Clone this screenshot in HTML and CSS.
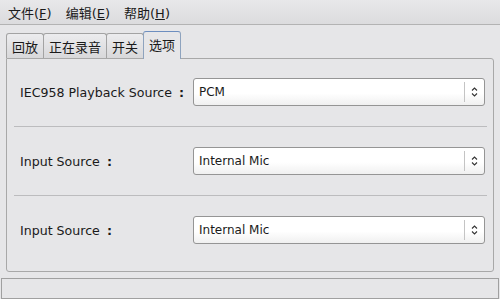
FILE: index.html
```html
<!DOCTYPE html>
<html lang="zh-CN">
<head>
  <meta charset="UTF-8" />
  <title>混音器</title>
  <link rel="stylesheet" href="styles.css">
</head>
<body>
  <div class="menubar">
    <span class="menu">文件(<u>F</u>)</span>
    <span class="menu">编辑(<u>E</u>)</span>
    <span class="menu">帮助(<u>H</u>)</span>
  </div>

  <!-- Tabs -->
  <div class="tabbar">
    <div class="tab">回放</div>
    <div class="tab">正在录音</div>
    <div class="tab">开关</div>
    <div class="tab active">选项</div>
  </div>

  <div class="panel">
    <div class="row">
      <span class="label">IEC958 Playback Source <b>:</b></span>
      <div class="combo">
        <span class="combo-text">PCM</span>
        <span class="combo-btn">
          <svg width="9" height="14" viewBox="0 0 9 14"><path d="M2 5.5 L4.5 3 L7 5.5 M2 8.5 L4.5 11 L7 8.5" fill="none" stroke="#333" stroke-width="1.1"/></svg>
        </span>
      </div>
    </div>
    <div class="sep"></div>
    <div class="row">
      <span class="label">Input Source <b>:</b></span>
      <div class="combo">
        <span class="combo-text">Internal Mic</span>
        <span class="combo-btn">
          <svg width="9" height="14" viewBox="0 0 9 14"><path d="M2 5.5 L4.5 3 L7 5.5 M2 8.5 L4.5 11 L7 8.5" fill="none" stroke="#333" stroke-width="1.1"/></svg>
        </span>
      </div>
    </div>
    <div class="sep"></div>
    <div class="row">
      <span class="label">Input Source <b>:</b></span>
      <div class="combo">
        <span class="combo-text">Internal Mic</span>
        <span class="combo-btn">
          <svg width="9" height="14" viewBox="0 0 9 14"><path d="M2 5.5 L4.5 3 L7 5.5 M2 8.5 L4.5 11 L7 8.5" fill="none" stroke="#333" stroke-width="1.1"/></svg>
        </span>
      </div>
    </div>
  </div>

  <div class="statusbar"></div>
</body>
</html>
```

FILE: styles.css
```css
* {
  box-sizing: border-box;
}
html, body {
  margin: 0;
  height: 299px;
  overflow: hidden;
}
body {
  font-family: "DejaVu Sans", "Noto Sans CJK SC", sans-serif;
  font-size: 12px;
  color: #1a1a1a;
  background: #e6e6e8;
  display: flex;
  flex-direction: column;
}
.menubar {
  flex: none;
  height: 25px;
  display: flex;
  align-items: center;
  padding-left: 8px;
  gap: 14px;
  background: linear-gradient(#e8e8ea, #dcdcde);
  border-bottom: 1px solid #b3b3b3;
  font-size: 13px;
}
.menu u {
  text-decoration-thickness: 1px;
}
.tabbar {
  flex: none;
  display: flex;
  align-items: flex-end;
  height: 27px;
  margin-top: 6px;
  padding-left: 6px;
}
.tab {
  height: 25px;
  padding: 0 5px;
  margin-right: -1px;
  display: flex;
  align-items: center;
  font-size: 13px;
  border: 1px solid #a3a3a3;
  border-bottom: none;
  border-radius: 3px 3px 0 0;
  background: linear-gradient(#ececee, #d8d8da);
}
.tab.active {
  height: 28px;
  margin-bottom: -1px;
  padding-bottom: 2px;
  position: relative;
  z-index: 1;
  background: #e6e6e8;
  border-color: #8ea3be;
  border-top-color: #6d8ebf;
}
.panel {
  flex: none;
  margin-left: 6px;
  width: 488px;
  height: 214px;
  padding: 0 6px 0 7px;
  border: 1px solid #a8a8a8;
  border-radius: 0 3px 3px 3px;
}
.row {
  display: grid;
  grid-template-columns: 173px 1fr;
  align-items: center;
  padding: 20px 2px 20px 6px;
}
.row:first-child {
  padding-top: 19px;
}
.label {
  font-size: 12.6px;
}
.label b {
  margin-left: 3px;
}
.sep {
  border-top: 1px solid #bcbcbe;
}
.combo {
  height: 28px;
  display: flex;
  align-items: center;
  border: 1px solid #959595;
  border-radius: 3px;
  background: linear-gradient(#ffffff 55%, #f0f0f0);
}
.combo-text {
  flex: 1;
  padding-left: 5px;
}
.combo-btn {
  width: 20px;
  height: 20px;
  display: flex;
  align-items: center;
  justify-content: center;
  border-left: 1px solid #c4c4c4;
}
.statusbar {
  flex: none;
  margin: 6px 0 0 1px;
  height: 21px;
  width: 498px;
  border: 1px solid #a0a0a0;
  background: #e6e6e8;
}
```
